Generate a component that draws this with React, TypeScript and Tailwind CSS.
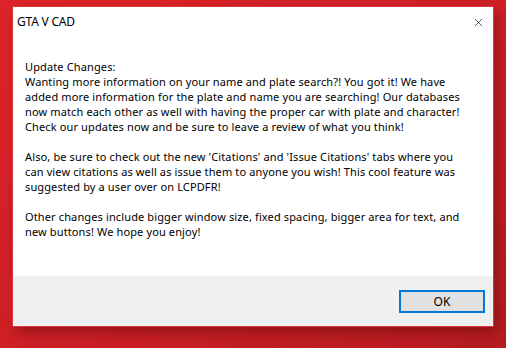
import { X } from 'lucide-react';

const paragraphs: string[][] = [
  [
    'Update Changes:',
    'Wanting more information on your name and plate search?! You got it! We have',
    'added more information for the plate and name you are searching! Our databases',
    'now match each other as well with having the proper car with plate and character!',
    'Check our updates now and be sure to leave a review of what you think!',
  ],
  [
    "Also, be sure to check out the new 'Citations' and 'Issue Citations' tabs where you",
    'can view citations as well as issue them to anyone you wish! This cool feature was',
    'suggested by a user over on LCPDFR!',
  ],
  [
    'Other changes include bigger window size, fixed spacing, bigger area for text, and',
    'new buttons! We hope you enjoy!',
  ],
];

const App = () => {
  return (
    <div className="h-[348px] w-[506px] overflow-hidden bg-gradient-to-br from-[#de2429] via-[#cf2026] to-[#b61c20] pt-[6px] pl-[12px] font-['Noto_Sans',sans-serif]">
      <div className="flex h-[321px] w-[482px] flex-col border border-[#d8393d] bg-white shadow-[4px_6px_12px_rgba(60,0,0,0.35)]">
        {/* Title bar */}
        <div className="flex h-[30px] items-center justify-between pr-[8px] pl-[4px]">
          <span className="text-[12px] tracking-[-0.2px] text-black">GTA V CAD</span>
          <X size={13} strokeWidth={1.2} className="text-black" />
        </div>

        {/* Message */}
        <div className="flex-1 pt-[22px] pl-[12px] text-[11px] leading-[15px] tracking-[0.13px] text-black">
          {paragraphs.map((lines, i) => (
            <p key={i} className="mb-[15px] whitespace-nowrap">
              {lines.map((line, j) => (
                <span key={j} className="block">
                  {line}
                </span>
              ))}
            </p>
          ))}
        </div>

        {/* Footer */}
        <div className="flex h-[50px] items-start justify-end bg-[#f0f0f0] pt-[14px] pr-[8px]">
          <button className="h-[23px] w-[86px] border-2 border-[#0078d7] bg-[#e1e1e1] text-[12px] text-black">
            OK
          </button>
        </div>
      </div>
    </div>
  );
};

export default App;
